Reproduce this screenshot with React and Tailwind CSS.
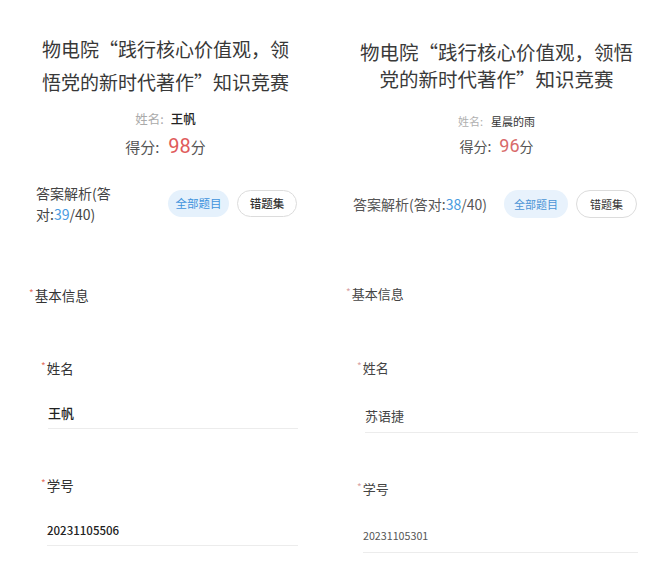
const SANS = { fontFamily: "'Noto Sans CJK SC', 'Noto Sans', sans-serif" };

function Star({ className }) {
  return <span className={`inline-block text-[10px] leading-none align-top mt-[3px] mr-[1px] ${className}`}>*</span>;
}

function LeftPanel() {
  return (
    <div className="flex flex-col text-[#333]" style={SANS}>
      {/* Header */}
      <h1 className="pt-[32px] px-[40px] text-center text-[19px] leading-[33px] font-normal text-[#383838]">
        物电院“践行核心价值观，领悟党的新时代著作”知识竞赛
      </h1>
      <div className="mt-3 flex justify-center items-center text-[12.5px] leading-[18px]">
        <span className="text-[#aaa]">姓名:</span>
        <span className="ml-[7px] font-medium text-[#222]">王帆</span>
      </div>
      <div className="mt-[6px] flex justify-center items-baseline leading-[24px] text-[15px] text-[#555]">
        <span>得分:</span>
        <span className="ml-[9px] text-[20px] text-[#e05b5b]" style={{ fontFamily: "Roboto, sans-serif" }}>98</span>
        <span>分</span>
      </div>

      {/* Answer analysis */}
      <div className="mt-[24px] flex items-center justify-between pl-[36px] pr-[34px]">
        <div className="text-[14px] leading-[20.5px] text-[#444]">
          <div>答案解析(答</div>
          <div>对:<span className="text-[#4a9be0]">39</span>/40)</div>
        </div>
        <div className="flex gap-2">
          <button className="w-[61px] h-[27px] rounded-full bg-[#e5f1fc] text-[11.5px] text-[#3f93dd]">全部题目</button>
          <button className="w-[60px] h-[27px] rounded-full border border-[#dcdcdc] bg-white text-[11.5px] font-medium text-[#333]">错题集</button>
        </div>
      </div>

      {/* Basic info */}
      <div className="mt-[61px] pl-[29px] text-[13.5px] leading-[20px] text-[#333]">
        <Star className="text-[#e4715f]" />基本信息
      </div>

      <div className="mt-[53px] pl-[41px] text-[13.5px] leading-[20px]">
        <Star className="text-[#e4715f]" />姓名
      </div>
      <div className="mt-[25px] ml-[48px] mr-[33px] pb-[5px] border-b border-[#ececec] text-[13px] leading-[20px] font-medium text-[#222]">
        王帆
      </div>

      <div className="mt-[46px] pl-[41px] text-[13.5px] leading-[20px]">
        <Star className="text-[#e4715f]" />学号
      </div>
      <div className="mt-[25px] ml-[47px] mr-[33px] pb-[5px] border-b border-[#ececec] text-[11.5px] leading-[20px] font-medium text-[#222]">
        20231105506
      </div>
    </div>
  );
}

function RightPanel() {
  return (
    <div className="flex flex-col text-[#444]" style={SANS}>
      {/* Header */}
      <h1 className="pt-[38px] px-[22px] text-center text-[19.5px] leading-[27px] font-normal text-[#3a3a3a]">
        物电院“践行核心价值观，领悟党的新时代著作”知识竞赛
      </h1>
      <div className="mt-[21px] flex justify-center items-center text-[11px] leading-[16px]">
        <span className="text-[#b0b0b0]">姓名:</span>
        <span className="ml-[8px] text-[#333]">星晨的雨</span>
      </div>
      <div className="mt-[6px] flex justify-center items-baseline leading-[22px] text-[14px] text-[#555]">
        <span>得分:</span>
        <span className="ml-[8px] text-[18px] text-[#d86a6a]" style={{ fontFamily: "Roboto, sans-serif" }}>96</span>
        <span>分</span>
      </div>

      {/* Answer analysis */}
      <div className="mt-[33px] flex items-center justify-between pl-[22px] pr-[25px]">
        <div className="text-[14px] leading-[20px] text-[#555] whitespace-nowrap">
          答案解析(答对:<span className="text-[#4a9be0]">38</span>/40)
        </div>
        <div className="flex gap-2">
          <button className="w-[64px] h-[28px] rounded-full bg-[#e8f2fc] text-[11px] text-[#4a94d6]">全部题目</button>
          <button className="w-[61px] h-[28px] rounded-full border border-[#dcdcdc] bg-white text-[11px] text-[#333]">错题集</button>
        </div>
      </div>

      {/* Basic info */}
      <div className="mt-[66px] pl-[15px] text-[13px] leading-[20px] text-[#444]">
        <Star className="text-[#d9a3a3]" />基本信息
      </div>

      <div className="mt-[54px] pl-[26px] text-[13px] leading-[20px]">
        <Star className="text-[#d9a3a3]" />姓名
      </div>
      <div className="mt-[28px] ml-[34px] mr-[24px] pb-[6px] border-b border-[#ececec] text-[13px] leading-[20px] text-[#444]">
        苏语捷
      </div>

      <div className="mt-[46px] pl-[26px] text-[13px] leading-[20px]">
        <Star className="text-[#d9a3a3]" />学号
      </div>
      <div className="mt-[27px] ml-[32px] mr-[24px] pb-[6px] border-b border-[#ececec] text-[10.7px] leading-[20px] text-[#555]">
        20231105301
      </div>
    </div>
  );
}

export default function App() {
  return (
    <div className="w-[662px] h-[567px] overflow-hidden bg-white grid grid-cols-2">
      <LeftPanel />
      <RightPanel />
    </div>
  );
}
